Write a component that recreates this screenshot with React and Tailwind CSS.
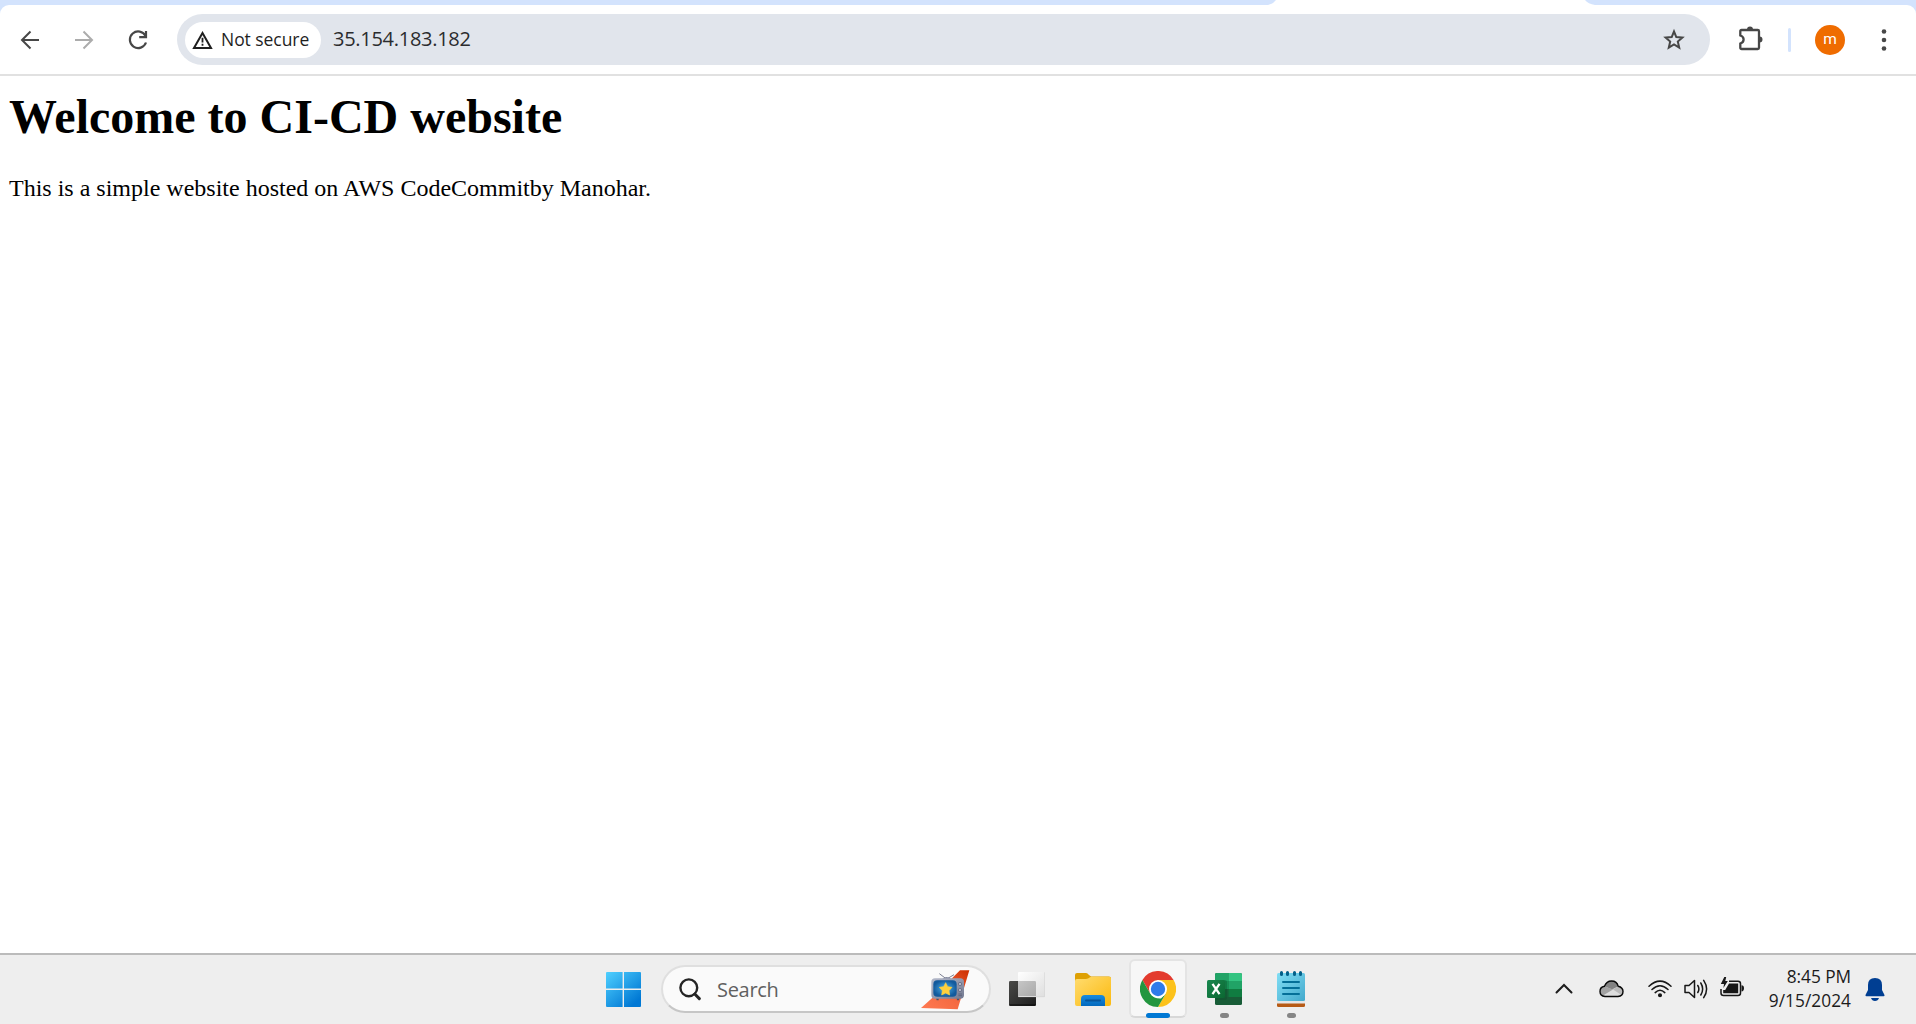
import React from "react";

function Toolbar() {
  return (
    <header className="h-[76px] shrink-0 bg-[#d3e3fd] flex flex-col">
      <div className="h-[5px] shrink-0 flex justify-end pr-[318px]">
        <svg className="w-[330px] h-[5px]" viewBox="0 0 330 5">
          <path d="M0 5Q5 4 8 0H317Q320 4 327 5Z" fill="#fff" />
        </svg>
      </div>
      <div className="h-[71px] bg-white rounded-t-[9px] border-b-2 border-[#e1e1e1] flex items-start pt-[9px]">
        <div className="flex items-center h-[51px] ml-[18px]">
          <svg className="w-6 h-6" viewBox="0 0 24 24" fill="none" stroke="#474747" strokeWidth="2">
            <path d="M21 12H4M12.5 3.5L4 12L12.5 20.5" />
          </svg>
          <svg className="w-6 h-6 ml-[30px]" viewBox="0 0 24 24" fill="none" stroke="#acacac" strokeWidth="2">
            <path d="M3 12H20M11.5 3.5L20 12L11.5 20.5" />
          </svg>
          <svg className="w-6 h-6 ml-[30px]" viewBox="0 0 24 24" fill="none" stroke="#474747" strokeWidth="2.2">
            <path d="M19.6 8A8.3 8.3 0 1 0 20 14.5M20 3V9.2H13.2" />
          </svg>
        </div>
        <div className="ml-[27px] w-[1533px] h-[51px] rounded-full bg-[#e1e5ec] flex items-center pl-2 pr-[24px]">
          <div className="w-[136px] h-9 rounded-full bg-white flex items-center pl-[7px]">
            <svg className="w-[21px] h-[18px]" viewBox="0 0 21 18">
              <path d="M10.5 2L19 16.9H2Z" fill="none" stroke="#1f1f1f" strokeWidth="2" />
              <path d="M10.5 6.8v4.6M10.5 12.7v2" stroke="#1f1f1f" strokeWidth="1.8" />
            </svg>
            <span className="ml-[8px] pb-px font-['Open_Sans'] font-medium text-[17.5px] leading-6 tracking-[-0.05px] text-[#1f1f1f] whitespace-nowrap">Not secure</span>
          </div>
          <span className="ml-[12px] pb-px font-['Open_Sans'] text-[20px] leading-7 tracking-[-0.28px] text-[#2b2c2e] whitespace-nowrap">35.154.183.182</span>
          <svg className="ml-auto w-6 h-6" viewBox="0 0 24 24" fill="none" stroke="#474747" strokeWidth="2">
            <path d="M12 3.5L14.3 9.1L20.4 9.6L15.8 13.6L17.2 19.6L12 16.4L6.8 19.6L8.2 13.6L3.6 9.6L9.7 9.1Z" />
          </svg>
        </div>
        <div className="flex items-center h-[51px] ml-[28px]">
          <svg className="w-[26px] h-[26px] mb-[3px]" viewBox="0 0 26 26">
            <path d="M3.5 5h16.2q1.3 0 1.3 1.3v16.4q0 1.3-1.3 1.3h-16q-1.4 0-1.4-1.3v-4.2q3.3-1 3.3-4t-3.3-4V6.3Q2.3 5 3.5 5Z" fill="none" stroke="#474747" strokeWidth="2.3" />
            <path d="M9 4.5a3 3 0 0 1 6 0ZM21.5 11.5a3 3 0 0 1 0 6Z" fill="#474747" />
          </svg>
          <span className="ml-[24px] w-[3px] h-6 rounded-full bg-[#d3e3fd]" />
          <span className="ml-6 w-[30px] h-[30px] rounded-full bg-[#ef6c00] text-white flex items-center justify-center font-[Roboto] text-[15.5px] leading-none">m</span>
          <svg className="ml-[35px] w-2 h-6" viewBox="0 0 8 24" fill="#474747">
            <circle cx="4" cy="3.5" r="2.3" /><circle cx="4" cy="12" r="2.3" /><circle cx="4" cy="20.5" r="2.3" />
          </svg>
        </div>
      </div>
    </header>
  );
}

function WindowsLogo() {
  return (
    <svg className="w-[35px] h-[35px]" viewBox="0 0 35 35">
      <defs><linearGradient id="win" gradientUnits="userSpaceOnUse" x1="0" y1="0" x2="28" y2="32"><stop stopColor="#4fd0ff" /><stop offset="1" stopColor="#0078d4" /></linearGradient></defs>
      <g fill="url(#win)"><path d="M1 0H16.6V16.6H0V1Q0 0 1 0ZM18 0H34Q35 0 35 1V16.6H18ZM0 18H16.6V35H1Q0 35 0 34ZM18 18H35V34Q35 35 34 35H18Z" /></g>
    </svg>
  );
}

function Television() {
  return (
    <svg className="w-[49px] h-[40px]" viewBox="93 74 147 120">
      <defs>
        <linearGradient id="rib" x1="0" y1="1" x2="1" y2="0"><stop stopColor="#ff7a52" /><stop offset=".5" stopColor="#f4683f" /><stop offset="1" stopColor="#cc2f00" /></linearGradient>
        <radialGradient id="scr"><stop stopColor="#4fb3ea" /><stop offset="1" stopColor="#125a9d" /></radialGradient>
        <linearGradient id="tvb" x1="0" y1="0" x2="1" y2="1"><stop stopColor="#b4b9ca" /><stop offset="1" stopColor="#737990" /></linearGradient>
      </defs>
      <path d="M210 75H238L203 192L93 188L130 155Z" fill="url(#rib)" />
      <path d="M148 85L168 100M192 88L172 100" stroke="#62667d" strokeWidth="2.5" />
      <path d="M157 101Q169 89 184 101Z" fill="#858aa0" />
      <path d="M138 158h8v7h-6zM200 158h8l-1 7h-6z" fill="#50546a" />
      <rect x="124" y="99" width="98" height="61" rx="11" fill="url(#tvb)" />
      <rect x="130" y="105" width="70" height="49" rx="12" fill="url(#scr)" />
      <path d="M167 112l6 12 13 2-9 10 2 13-12-6-12 6 2-13-9-10 13-2z" fill="#ffd03c" stroke="#ffd03c" strokeWidth="2" strokeLinejoin="round" />
      <g fill="#b5b9ca" stroke="#585d76" strokeWidth="2"><circle cx="210" cy="116" r="5" /><circle cx="210" cy="134" r="5" /></g>
      <path d="M205 146h11M205 151h11" stroke="#535870" strokeWidth="2" />
    </svg>
  );
}

function TaskView() {
  return (
    <svg className="w-9 h-[35px]" viewBox="357 81 108 105">
      <defs>
        <linearGradient id="dk" x1="0" y1="0" x2="1" y2="1"><stop stopColor="#4a4a48" /><stop offset="1" stopColor="#1d1d1d" /></linearGradient>
        <linearGradient id="lt" x1="0" y1="0" x2="1" y2="1"><stop stopColor="#fff" /><stop offset="1" stopColor="#dedede" /></linearGradient>
        <linearGradient id="ov" x1="0" y1="0" x2="1" y2="1"><stop stopColor="#c6c6c6" /><stop offset="1" stopColor="#a9a9a9" /></linearGradient>
      </defs>
      <rect x="357" y="108" width="81" height="75" rx="4" fill="url(#dk)" />
      <path d="M359 180H436" stroke="#080808" strokeWidth="3" />
      <rect x="384" y="81" width="81" height="75" rx="3" fill="url(#lt)" />
      <path d="M384 108H434Q438 108 438 112V153H384Z" fill="url(#ov)" />
      <path d="M385 155H464V82" fill="none" stroke="#d3d3d3" strokeWidth="2" />
    </svg>
  );
}

function Folder() {
  return (
    <svg className="w-9 h-[34px]" viewBox="0 0 36 34">
      <defs>
        <linearGradient id="fo" x1="0" y1="0" x2="1" y2="1"><stop stopColor="#ffdc70" /><stop offset="1" stopColor="#fbb90e" /></linearGradient>
        <linearGradient id="fb" x1="0" y1="0" x2="0" y2="1"><stop stopColor="#178bdf" /><stop offset="1" stopColor="#0369bd" /></linearGradient>
      </defs>
      <path d="M0 2Q0 0 2 0H11Q12.5 0 14 2L16 3.5H34Q36 3.5 36 5.5V10H0Z" fill="#dea003" />
      <path d="M0 8Q0 6 2 6H11Q13 6 15 4.2Q15.7 3.7 17 3.7H34Q36 3.7 36 5.5V31Q36 33 34 33H2Q0 33 0 31Z" fill="url(#fo)" />
      <path d="M6 33V26Q6 22 10 22H26Q30 22 30 26V33Z" fill="url(#fb)" />
      <path d="M11 27.5H25" stroke="#07559a" strokeWidth="2" strokeLinecap="round" />
    </svg>
  );
}

function Chrome() {
  return (
    <svg className="w-9 h-9 shrink-0" viewBox="0 0 36 36">
      <path d="M2.4 9A18 18 0 0 1 33.6 9H18L10.2 22.5Z" fill="#e33b2e" />
      <path d="M33.6 9A18 18 0 0 1 18 36L25.8 22.5L18 9Z" fill="#fcc21b" />
      <path d="M18 36A18 18 0 0 1 2.4 9L10.2 22.5Q14 28 21 27.5L25.8 22.5Z" fill="#23963f" />
      <circle cx="18" cy="18" r="9" fill="#fff" />
      <circle cx="18" cy="18" r="7.2" fill="#2f7bea" />
    </svg>
  );
}

function Excel() {
  return (
    <svg className="w-[35px] h-[33px]" viewBox="0 0 35 33">
      <defs><linearGradient id="xl" x1="0" y1="0" x2="1" y2="1"><stop stopColor="#18884f" /><stop offset="1" stopColor="#0b6731" /></linearGradient></defs>
      <rect x="8" width="27" height="32" rx="1.5" fill="#185c37" />
      <path d="M9.5 0H21.5V8H8V1.5Q8 0 9.5 0Z" fill="#21a366" />
      <path d="M21.5 0H33.5Q35 0 35 1.5V8H21.5Z" fill="#33c481" />
      <path d="M8 8H21.5V16H8Z" fill="#169154" /><path d="M21.5 8H35V16H21.5Z" fill="#21a366" />
      <path d="M8 16H21.5V24H8Z" fill="#17613a" /><path d="M21.5 16H35V24H21.5Z" fill="#107c41" />
      <path d="M8 7H18Q20 7 20 9V25Q20 27 18 27H8Z" fill="#0b4d2c" opacity=".35" />
      <rect y="7" width="18" height="18" rx="1.5" fill="url(#xl)" />
      <path d="M5.5 10.8L12.5 21.2M12.5 10.8L5.5 21.2" stroke="#fff" strokeWidth="2.3" />
    </svg>
  );
}

function Notepad() {
  return (
    <svg className="w-7 h-9" viewBox="0 0 28 36">
      <defs><linearGradient id="np" x1="0" y1="0" x2="1" y2="1"><stop stopColor="#81def5" /><stop offset="1" stopColor="#43a9cc" /></linearGradient></defs>
      <path d="M0 31H28V34.5Q28 36 26.5 36H1.5Q0 36 0 34.5Z" fill="#b75b16" />
      <rect y="28" width="28" height="4.5" fill="#e6e6e6" />
      <rect y="2" width="28" height="28" rx="1.5" fill="url(#np)" />
      <path d="M4.5 1.5V3.5M10.5 1.5V3.5M17.5 1.5V3.5M23.5 1.5V3.5" stroke="#036089" strokeWidth="3" strokeLinecap="round" />
      <path d="M6 11H22M6 17H22M6 23H22" stroke="#046f98" strokeWidth="2" strokeLinecap="round" />
    </svg>
  );
}

function Tray() {
  return (
    <div className="flex items-start ml-auto pr-[31px]">
      <svg className="w-[18px] h-3 mt-[28px]" viewBox="0 0 18 12"><path d="M1.5 9.5L9 2L16.5 9.5" fill="none" stroke="#1d1d1d" strokeWidth="2" strokeLinecap="round" /></svg>
      <svg className="w-[25px] h-[18px] ml-[26px] mt-[25px]" viewBox="0 0 25 18">
        <path d="M6 16.5Q1 16 1 11.5Q1 7 5.5 6.3Q7.5 1 12.5 1Q18 1 19.2 6.3Q24 7.5 24 11.5Q24 16 19 16.5Z" fill="#dedede" />
        <path d="M5.5 6.3Q7.5 1 12.5 1Q18 1 19.2 6.3L13 9.5Z" fill="#828282" />
        <path d="M5.5 6.3L14 9.5L4 15.5Q1 14 1 11.5Q1 7 5.5 6.3Z" fill="#a2a2a2" />
        <path d="M19.2 6.3L14 9.5L22.5 15Q24 14 24 11.5Q24 7.5 19.2 6.3Z" fill="#bababa" />
        <path d="M6 16.5Q1 16 1 11.5Q1 7 5.5 6.3Q7.5 1 12.5 1Q18 1 19.2 6.3Q24 7.5 24 11.5Q24 16 19 16.5Z" fill="none" stroke="#080808" strokeWidth="1.4" />
      </svg>
      <svg className="w-6 h-[18px] ml-[24px] mt-[25px]" viewBox="0 0 24 18" fill="none" stroke="#171717" strokeWidth="1.5" strokeLinecap="round">
        <path d="M1 6.2Q12-4 23 6.2M4 9.5Q12 2 20 9.5M7.2 12.6Q12 8 16.8 12.6" /><circle cx="12" cy="15.3" r="1.3" fill="#171717" />
      </svg>
      <svg className="w-6 h-5 ml-[12px] mt-[24px]" viewBox="0 0 24 20" fill="none" stroke="#171717" strokeWidth="1.5" strokeLinejoin="round" strokeLinecap="round">
        <path d="M1 6.5H5L10.5 1.5V18.5L5 13.5H1ZM13.8 6.5Q16 10 13.8 13.5M16.8 4Q20.5 10 16.8 16M19.7 1.3Q25.5 10 19.7 18.7" />
      </svg>
      <svg className="w-6 h-5 ml-[12px] mt-[22px]" viewBox="0 0 24 20">
        <path d="M9 4.2H18Q20.5 4.2 20.5 6.7V16Q20.5 18.5 18 18.5H3.5Q1 18.5 1 16V12" fill="none" stroke="#171717" strokeWidth="1.5" />
        <path d="M9 6.5H18.2V16.3H3.2V13H5.2ZM21.5 8.2Q24 8.2 24 11.3T21.5 14.4Z" fill="#171717" />
        <path d="M4.3 0H6.2L5.3 4H7.8L3.4 11L4 7H0.8Z" fill="#171717" />
      </svg>
      <div className="ml-[14px] mt-[10px] w-[93px] flex flex-col items-end font-['Open_Sans'] text-[17.3px] leading-6 text-[#1b1b1b] whitespace-nowrap">
        <span className="tracking-[-0.05px]">8:45 PM</span>
        <span className="tracking-[0.05px]">9/15/2024</span>
      </div>
      <svg className="w-5 h-[23px] ml-[14px] mt-[23px]" viewBox="0 0 20 23" fill="#003e92">
        <path d="M10 0Q17 0 17 7V12L19.5 17Q19.8 18.3 18.5 18.3H1.5Q.2 18.3 .5 17L3 12V7Q3 0 10 0ZM6 20H14Q13 23 10 23T6 20Z" />
      </svg>
    </div>
  );
}

function Taskbar() {
  return (
    <footer className="h-[71px] shrink-0 bg-[#eeeeee] border-t-2 border-[#bbbbbb] flex items-start">
      <div className="ml-[606px] mt-[17px]"><WindowsLogo /></div>
      <div className="ml-5 mt-[10px] w-[330px] h-[48px] shrink-0 rounded-full border-2 border-[#dfdfdf] border-b-[#c6c6c6] bg-[#fafafa] flex items-center pl-4 pr-[19px]">
        <svg className="w-[22px] h-[23px]" viewBox="0 0 22 23" fill="none" stroke="#242424" strokeWidth="2.4" strokeLinecap="round"><circle cx="9.8" cy="9.8" r="8.4" /><path d="M15.8 16L20.3 20.6" strokeWidth="3" /></svg>
        <span className="ml-[16px] font-['Open_Sans'] text-[20px] leading-7 pt-px tracking-[-0.3px] text-[#606060]">Search</span>
        <div className="ml-auto pt-px"><Television /></div>
      </div>
      <div className="ml-[18px] mt-[17px]"><TaskView /></div>
      <div className="ml-[30px] mt-[18px]"><Folder /></div>
      <div className="ml-[18px] mt-1 w-[58px] h-[59px] shrink-0 rounded-md bg-[#f7f7f7] border-2 border-[#e4e4e4] border-b-[#d8d8d8] flex flex-col items-center pt-[10px]">
        <Chrome /><span className="mt-[6px] w-6 h-[5px] shrink-0 rounded-full bg-[#0078d4]" />
      </div>
      <div className="ml-[20px] mt-[18px] flex flex-col items-center"><Excel /><span className="mt-[7px] w-[9px] h-[5px] rounded-full bg-[#858585]" /></div>
      <div className="ml-[35px] mt-4 flex flex-col items-center"><Notepad /><span className="mt-[6px] w-[9px] h-[5px] rounded-full bg-[#858585]" /></div>
      <Tray />
    </footer>
  );
}

export default function App() {
  return (
    <div className="w-[1916px] h-[1024px] overflow-hidden bg-white flex flex-col">
      <Toolbar />
      <main className="flex-1 pl-[9px] pt-[13px] font-['Liberation_Serif'] text-black">
        <h1 className="text-[48px] leading-[56px] font-bold whitespace-nowrap">Welcome to CI-CD website</h1>
        <p className="mt-[29px] text-[24px] leading-7 whitespace-nowrap">This is a simple website hosted on AWS CodeCommitby Manohar.</p>
      </main>
      <Taskbar />
    </div>
  );
}
